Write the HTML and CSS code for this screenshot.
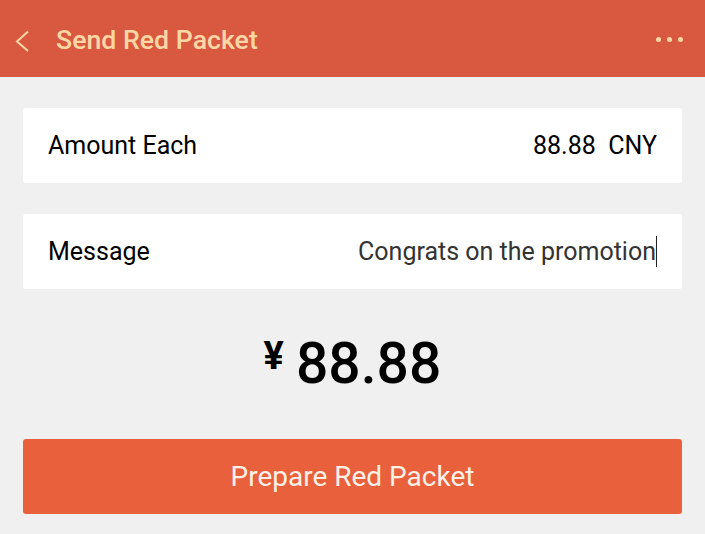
FILE: index.html
```html
<!DOCTYPE html>
<html>
<head>
<meta charset="utf-8">
<link rel="stylesheet" href="styles.css">
</head>
<body>
<div class="app">
  <header class="topbar">
    <div class="left">
      <svg class="back" width="16" height="22" viewBox="0 0 16 22"><path d="M14 1.5 L3 11.5 L14 21" fill="none" stroke="#fcd7a6" stroke-width="2"/></svg>
      <span class="title">Send Red Packet</span>
    </div>
    <div class="more"><i></i><i></i><i></i></div>
  </header>
  <main class="content">
    <div class="card">
      <span class="label">Amount Each</span>
      <span class="value">88.88&nbsp;&nbsp;CNY</span>
    </div>
    <div class="card">
      <span class="label">Message</span>
      <span class="value msg">Congrats on the promotion<span class="caret"></span></span>
    </div>
    <div class="total"><span class="yen">¥</span><span class="num">88.88</span></div>
    <button class="btn">Prepare Red Packet</button>
  </main>
</div>
</body>
</html>
```
FILE: styles.css
```css
* { box-sizing: border-box; }
html, body { margin: 0; padding: 0; }
body { background: #f0f0f0; font-family: Roboto, "Noto Sans", sans-serif; width: 705px; height: 534px; overflow: hidden; }
.topbar { height: 77px; background: #d95940; display: flex; align-items: center; justify-content: space-between; padding: 2px 22px 0 14px; }
.left { display: flex; align-items: center; }
.back { margin-right: 26px; margin-top: 2px; }
.title { color: #fcd7a6; font-size: 26.7px; font-weight: 500; }
.more { display: flex; gap: 6px; }
.more i { width: 5px; height: 5px; border-radius: 50%; background: #fcd7a6; display: block; }
.content { padding: 31px 23px 0 23px; display: flex; flex-direction: column; }
.card { background: #fff; height: 75px; border-radius: 3px; display: flex; align-items: center; justify-content: space-between; padding: 0 25px; margin-bottom: 31px; }
.label { font-size: 25px; color: #000; }
.value { font-size: 25px; color: #000; }
.msg { color: #333; display: flex; align-items: center; }
.caret { display: inline-block; width: 1px; height: 31px; background: #222; }
.total { display: flex; justify-content: center; align-items: baseline; height: 119px; padding-top: 10px; }
.yen { font-size: 38px; font-weight: 700; margin-right: 12px; position: relative; top: -14px; }
.num { font-size: 57px; font-weight: 500; color: #000; }
.btn { height: 75px; border: none; border-radius: 3px; background: #e8603c; color: #fdf1e6; font-family: Roboto, sans-serif; font-size: 28px; }
```
